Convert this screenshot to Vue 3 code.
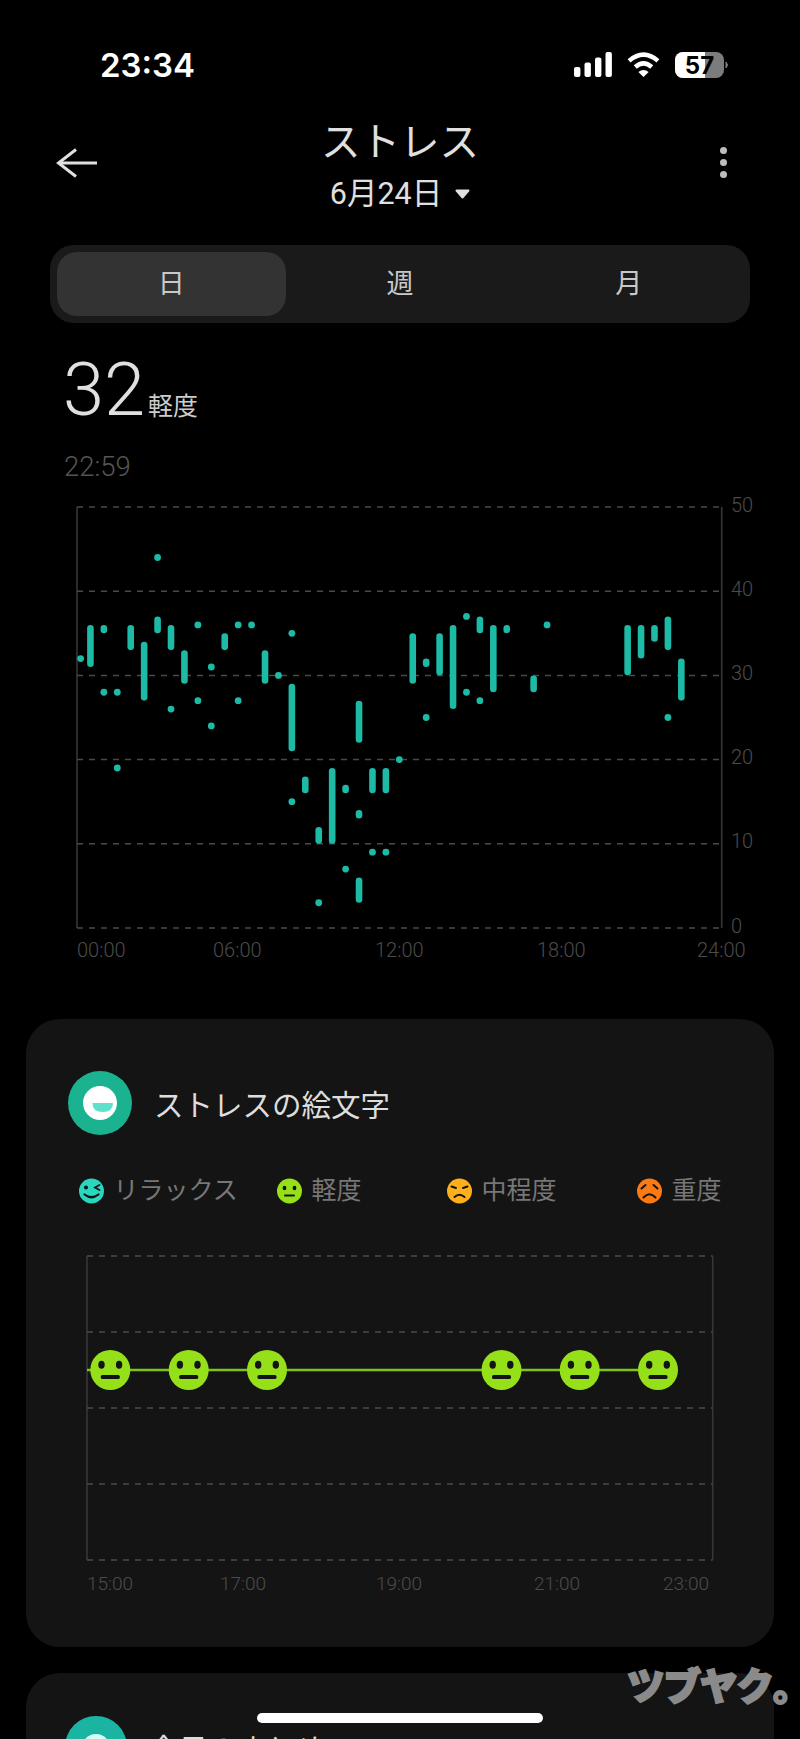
<script setup>
const xAt = (k) => 77 + k * 13.43
const yAt = (v) => 928 - v * 8.42

// [slot, top, bottom]
const bars = [
  [1, 36, 31], [2, 36, 35], [4, 36, 33], [5, 34, 27], [6, 37, 35], [7, 36, 33], [8, 33, 29],
  [11, 35, 33], [14, 33, 29], [16, 29, 21], [17, 18, 16], [18, 12, 10], [19, 19, 10],
  [20, 17, 16], [21, 27, 22], [21, 14, 13], [21, 6, 3], [22, 19, 16], [23, 19, 16],
  [25, 35, 29], [26, 32, 31], [27, 35, 30], [28, 36, 26], [30, 37, 35], [31, 36, 28],
  [32, 36, 35], [34, 30, 28], [41, 36, 30], [42, 36, 32], [43, 36, 34], [44, 37, 33], [45, 32, 27]
]
// [slot, value]
const dots = [
  [0.27, 32], [2, 28], [3, 28], [3, 19], [6, 44], [7, 26], [9, 36], [9, 27], [10, 31], [10, 24],
  [12, 36], [12, 27], [13, 36], [15, 30], [16, 35], [16, 15], [18, 3], [20, 7], [22, 9], [23, 9],
  [24, 20], [26, 25], [29, 37], [29, 28], [30, 27], [35, 36], [44, 25]
]

const gridLines = [0, 10, 20, 30, 40, 50]
const hours = [
  { label: '00:00', x: 77 },
  { label: '06:00', x: 213 },
  { label: '12:00', x: 375 },
  { label: '18:00', x: 537 },
  { label: '24:00', x: 697 }
]

const legend = [
  { name: 'リラックス', type: 'wink', color: '#2bd6bf' },
  { name: '軽度', type: 'mild', color: '#96e01a' },
  { name: '中程度', type: 'mid', color: '#fdb01c' },
  { name: '重度', type: 'bad', color: '#fb7a15' }
]

const emojiGrid = [1256, 1332, 1408, 1484, 1560]
const emojiPoints = [110.3, 188.7, 267, 501.5, 579.7, 658]
const emojiHours = [
  { label: '15:00', x: 87 },
  { label: '17:00', x: 220 },
  { label: '19:00', x: 376 },
  { label: '21:00', x: 534 },
  { label: '23:00', x: 663 }
]
</script>

<template>
  <div class="page">
    <div class="status">
      <span class="clock">23:34</span>
      <div class="status-icons">
        <svg width="38" height="25" viewBox="0 0 38 25" fill="#fff">
          <rect x="0" y="15" width="6.4" height="10" rx="2" />
          <rect x="10.5" y="10.5" width="6.4" height="14.5" rx="2" />
          <rect x="21" y="5.5" width="6.4" height="19.5" rx="2" />
          <rect x="31.5" y="0" width="6.4" height="25" rx="2" />
        </svg>
        <svg width="33" height="25" viewBox="0 0 32 24" fill="none" stroke="#fff" stroke-width="4.4">
          <path d="M2 8.5 Q16 -3.5 30 8.5" />
          <path d="M8 14.5 Q16 7.5 24 14.5" />
          <path d="M11 19.2 Q16 15.4 21 19.2 L16 24 Z" fill="#fff" stroke="none" />
        </svg>
        <svg width="54" height="26" viewBox="0 0 54 26">
          <rect x="0" y="0" width="49" height="26" rx="8" fill="#7c7c7c" />
          <path d="M8 0 H30 V26 H8 A8 8 0 0 1 0 18 V8 A8 8 0 0 1 8 0 Z" fill="#fff" />
          <path d="M51 10 Q54 13 51 16 Z" fill="#7c7c7c" stroke="#7c7c7c" />
          <text x="24.5" y="21.5" class="battery-num" text-anchor="middle">57</text>
        </svg>
      </div>
    </div>

    <header class="header">
      <svg class="back" width="42" height="30" viewBox="0 0 42 30" fill="none" stroke="#e0e0e0" stroke-width="3">
        <path d="M41 15 H3" />
        <path d="M20 1.5 L2.5 15 L20 28.5" />
      </svg>
      <div class="titles">
        <h1>ストレス</h1>
        <div class="date">
          <span>6月24日</span>
          <svg width="15" height="10" viewBox="0 0 15 10">
            <path d="M1.5 1.5 H13.5 L7.5 8.5 Z" fill="#e0e0e0" stroke="#e0e0e0" stroke-width="2" stroke-linejoin="round" />
          </svg>
        </div>
      </div>
      <div class="more">
        <i></i><i></i><i></i>
      </div>
    </header>

    <div class="tabs">
      <div class="tab active">日</div>
      <div class="tab">週</div>
      <div class="tab">月</div>
    </div>

    <div class="summary">
      <span class="score">32</span>
      <span class="level">軽度</span>
    </div>
    <div class="summary-time">22:59</div>

    <svg class="stress-chart" width="800" height="485" viewBox="0 490 800 485">
      <line x1="77" y1="507" x2="77" y2="928" class="axis" />
      <line x1="721.7" y1="507" x2="721.7" y2="928" class="axis" />
      <line
        v-for="v in gridLines"
        :key="v"
        x1="77"
        x2="721.7"
        :y1="yAt(v)"
        :y2="yAt(v)"
        class="grid"
      />
      <rect
        v-for="(b, i) in bars"
        :key="'b' + i"
        :x="xAt(b[0]) - 3.3"
        :y="yAt(b[1])"
        width="6.6"
        :height="(b[1] - b[2]) * 8.42"
        rx="3.3"
        class="mark"
      />
      <circle
        v-for="(d, i) in dots"
        :key="'d' + i"
        :cx="xAt(d[0])"
        :cy="yAt(d[1])"
        r="3.4"
        class="mark"
      />
      <text v-for="v in gridLines" :key="'y' + v" x="731" :y="yAt(v) + 4.5" class="tick">{{ v }}</text>
      <text v-for="h in hours" :key="h.label" :x="h.x" y="957" class="tick">{{ h.label }}</text>
    </svg>

    <section class="card">
      <div class="card-head">
        <svg width="64" height="64" viewBox="0 0 64 64">
          <circle cx="32" cy="32" r="32" fill="#1ab28f" />
          <circle cx="32" cy="32" r="17" fill="#fff" />
          <path d="M24.5 32 H45 Q45 41 34.7 41 Q24.5 41 24.5 32 Z" fill="#5fe0c8" />
        </svg>
        <h2>ストレスの絵文字</h2>
      </div>

      <div class="legend">
        <div v-for="item in legend" :key="item.name" class="legend-item">
          <svg width="25" height="26" viewBox="-12.5 -13 25 26">
            <circle r="12.5" :fill="item.color" />
            <g v-if="item.type === 'wink'" fill="none" stroke="#141414" stroke-width="1.8" stroke-linecap="round">
              <circle cx="-5.5" cy="-3.5" r="2" fill="#141414" stroke="none" />
              <path d="M8 -6 L3.5 -3.5 L8 -1" />
              <path d="M-7 3.5 Q0 9 7 3.5" stroke-width="2.2" />
            </g>
            <g v-else-if="item.type === 'mild'" fill="#141414">
              <ellipse cx="-5" cy="-3" rx="1.9" ry="2.3" />
              <ellipse cx="5" cy="-3" rx="1.9" ry="2.3" />
              <rect x="-5.5" y="3.4" width="11" height="2.2" rx="1" />
            </g>
            <g v-else-if="item.type === 'mid'" fill="none" stroke="#141414" stroke-width="2" stroke-linecap="round">
              <path d="M-8 -4.5 L-3.5 -3" />
              <path d="M8 -4.5 L3.5 -3" />
              <path d="M-5 6 Q0 1.5 5 6" />
            </g>
            <g v-else fill="none" stroke="#141414" stroke-width="2" stroke-linecap="round">
              <path d="M-8 -2.5 L-4 -6" />
              <path d="M8 -2.5 L4 -6" />
              <path d="M-6 6.5 Q0 0 6 6.5" />
            </g>
          </svg>
          <span>{{ item.name }}</span>
        </div>
      </div>

      <svg class="emoji-chart" width="748" height="380" viewBox="26 1230 748 380">
        <line x1="87" y1="1256" x2="87" y2="1560" class="axis" />
        <line x1="712.7" y1="1256" x2="712.7" y2="1560" class="axis" />
        <line
          v-for="y in emojiGrid"
          :key="y"
          x1="87"
          x2="712.7"
          :y1="y"
          :y2="y"
          class="grid"
        />
        <line x1="87" y1="1370" x2="658" y2="1370" class="trend" />
        <g v-for="x in emojiPoints" :key="x" :transform="`translate(${x} 1370)`">
          <circle r="20" fill="#96e01a" />
          <ellipse cx="-8.8" cy="-5.2" rx="3.2" ry="4" fill="#141414" />
          <ellipse cx="8.8" cy="-5.2" rx="3.2" ry="4" fill="#141414" />
          <rect x="-9.5" y="5" width="19" height="4" rx="1.6" fill="#141414" />
        </g>
        <text v-for="h in emojiHours" :key="h.label" :x="h.x" y="1589.5" class="tick small">{{ h.label }}</text>
      </svg>
    </section>

    <section class="card next">
      <div class="card-head">
        <svg width="62" height="62" viewBox="0 0 62 62">
          <circle cx="31" cy="31" r="31" fill="#1ab5a2" />
          <circle cx="31" cy="32" r="14" fill="#d8fbf6" />
        </svg>
        <h2>今日のまとめ</h2>
      </div>
    </section>

    <div class="home-bar"></div>
    <div class="watermark">ツブヤク<span class="watermark-dot">。</span></div>
  </div>
</template>

<style scoped>
.page {
  position: relative;
  width: 800px;
  height: 1739px;
  overflow: hidden;
  background: #000;
  color: #e0e0e0;
  font-family: Roboto, "Noto Sans CJK JP", sans-serif;
}

.status {
  display: flex;
  justify-content: space-between;
  box-sizing: border-box;
  height: 120px;
  padding: 50px 71px 0 100px;
}

.clock {
  font-family: Inter, sans-serif;
  font-size: 33px;
  font-weight: 600;
  line-height: 30px;
  color: #fff;
}

.status-icons {
  display: flex;
  align-items: flex-start;
  gap: 15px;
  padding-top: 2px;
}

.battery-num {
  font-family: Inter, sans-serif;
  font-size: 24px;
  font-weight: 700;
  fill: #000;
}

.header {
  display: grid;
  grid-template-columns: 1fr auto 1fr;
  align-items: start;
  padding: 0 56px;
}

.back {
  margin-top: 28px;
}

.titles {
  text-align: center;
}

h1 {
  margin: 0;
  font-size: 39.5px;
  font-weight: 400;
  line-height: 46px;
}

.date {
  display: flex;
  align-items: center;
  justify-content: center;
  gap: 13px;
  margin-top: 10px;
  font-size: 30.5px;
  line-height: 36px;
}

.more {
  display: flex;
  flex-direction: column;
  align-items: flex-end;
  gap: 5px;
  margin: 26.5px 17px 0 0;
}

.more i {
  width: 7px;
  height: 7px;
  border-radius: 50%;
  background: #bdbdbd;
}

.tabs {
  display: grid;
  grid-template-columns: repeat(3, 1fr);
  margin: 33px 50px 0;
  padding: 7px;
  border-radius: 24px;
  background: #1a1a1a;
}

.tab {
  height: 64px;
  border-radius: 20px;
  font-size: 27px;
  line-height: 64px;
  text-align: center;
  color: #c8c8c8;
}

.tab.active {
  background: #333;
}

.summary {
  display: flex;
  align-items: baseline;
  gap: 3px;
  margin: 31px 0 0 63px;
}

.score {
  font-size: 74px;
  font-weight: 300;
  line-height: 72px;
  color: #e0e0e0;
}

.level {
  font-size: 25px;
  color: #ccc;
}

.summary-time {
  margin: 26px 0 0 64px;
  font-size: 27.5px;
  font-weight: 300;
  line-height: 30px;
  color: #555;
}

.stress-chart {
  display: block;
  margin-top: 8px;
}

.axis {
  stroke: #363636;
  stroke-width: 1.6;
}

.grid {
  stroke: #4a4a4a;
  stroke-width: 1.5;
  stroke-dasharray: 6 6;
}

.mark {
  fill: #1dbaa6;
}

.tick {
  font-size: 20px;
  font-weight: 300;
  fill: #4c4c4c;
}

.tick.small {
  font-size: 19px;
}

.trend {
  stroke: #7cc417;
  stroke-width: 2.4;
}

.card {
  box-sizing: border-box;
  height: 628px;
  margin: 44px 26px 0;
  padding-top: 52px;
  border-radius: 34px;
  background: #141414;
}

.card-head {
  display: flex;
  align-items: center;
  gap: 22px;
  padding-left: 42px;
}

h2 {
  margin: -1px 0 0;
  font-size: 29.5px;
  font-weight: 400;
  color: #ddd;
}

.legend {
  display: grid;
  grid-template-columns: 198px 170px 190px auto;
  margin-top: 38px;
  padding-left: 52.5px;
}

.legend-item {
  display: flex;
  align-items: center;
  gap: 10px;
  font-size: 25px;
  line-height: 36px;
  color: #777;
}

.emoji-chart {
  display: block;
  margin-top: 21px;
}

.card.next {
  margin-top: 26px;
  padding-top: 43px;
}

.card.next .card-head {
  gap: 22px;
  padding-left: 39px;
}

.home-bar {
  position: absolute;
  left: 257px;
  top: 1713px;
  width: 286px;
  height: 10px;
  border-radius: 5px;
  background: #fff;
}

.watermark {
  position: absolute;
  left: 627px;
  top: 1661px;
  font-size: 37.5px;
  font-weight: 900;
  line-height: 52px;
  letter-spacing: -1px;
  white-space: nowrap;
  color: #8a8a8a;
  -webkit-text-stroke: 2px #8a8a8a;
}

.watermark-dot {
  letter-spacing: -18px;
}
</style>

<style>
body {
  margin: 0;
  background: #000;
}
</style>
